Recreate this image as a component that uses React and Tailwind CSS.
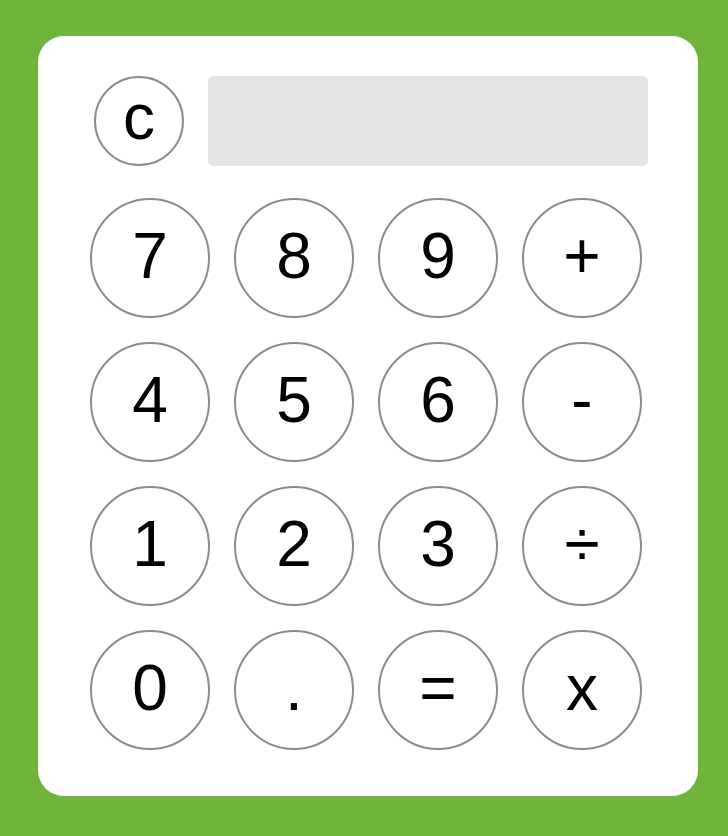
import React from 'react';

const keys = ['7', '8', '9', '+', '4', '5', '6', '-', '1', '2', '3', '÷', '0', '.', '=', 'x'];

function Key({ label }) {
  return (
    <button className="w-[120px] h-[120px] rounded-full border-2 border-[#8c8c8c] bg-white flex items-center justify-center text-[64px] leading-none text-black pb-[4px]">
      {label}
    </button>
  );
}

export default function App() {
  return (
    <div
      className="w-[728px] h-[836px] bg-[#70b43a] pt-[36px] pl-[38px]"
      style={{ fontFamily: '"Liberation Sans", Arial, sans-serif' }}
    >
      <div className="w-[660px] h-[760px] bg-white rounded-[26px] pt-[40px] pl-[52px]">
        {/* top row */}
        <div className="flex items-center gap-6 pl-[4px]">
          <button className="w-[90px] h-[90px] rounded-full border-2 border-[#8c8c8c] bg-white flex items-center justify-center text-[64px] leading-none text-black pb-[9px]">
            c
          </button>
          <div className="w-[440px] h-[90px] bg-[#e5e5e5] rounded-[5px]" />
        </div>

        {/* keypad */}
        <div className="grid grid-cols-[repeat(4,120px)] gap-6 mt-[32px]">
          {keys.map((k) => (
            <Key key={k} label={k} />
          ))}
        </div>
      </div>
    </div>
  );
}
